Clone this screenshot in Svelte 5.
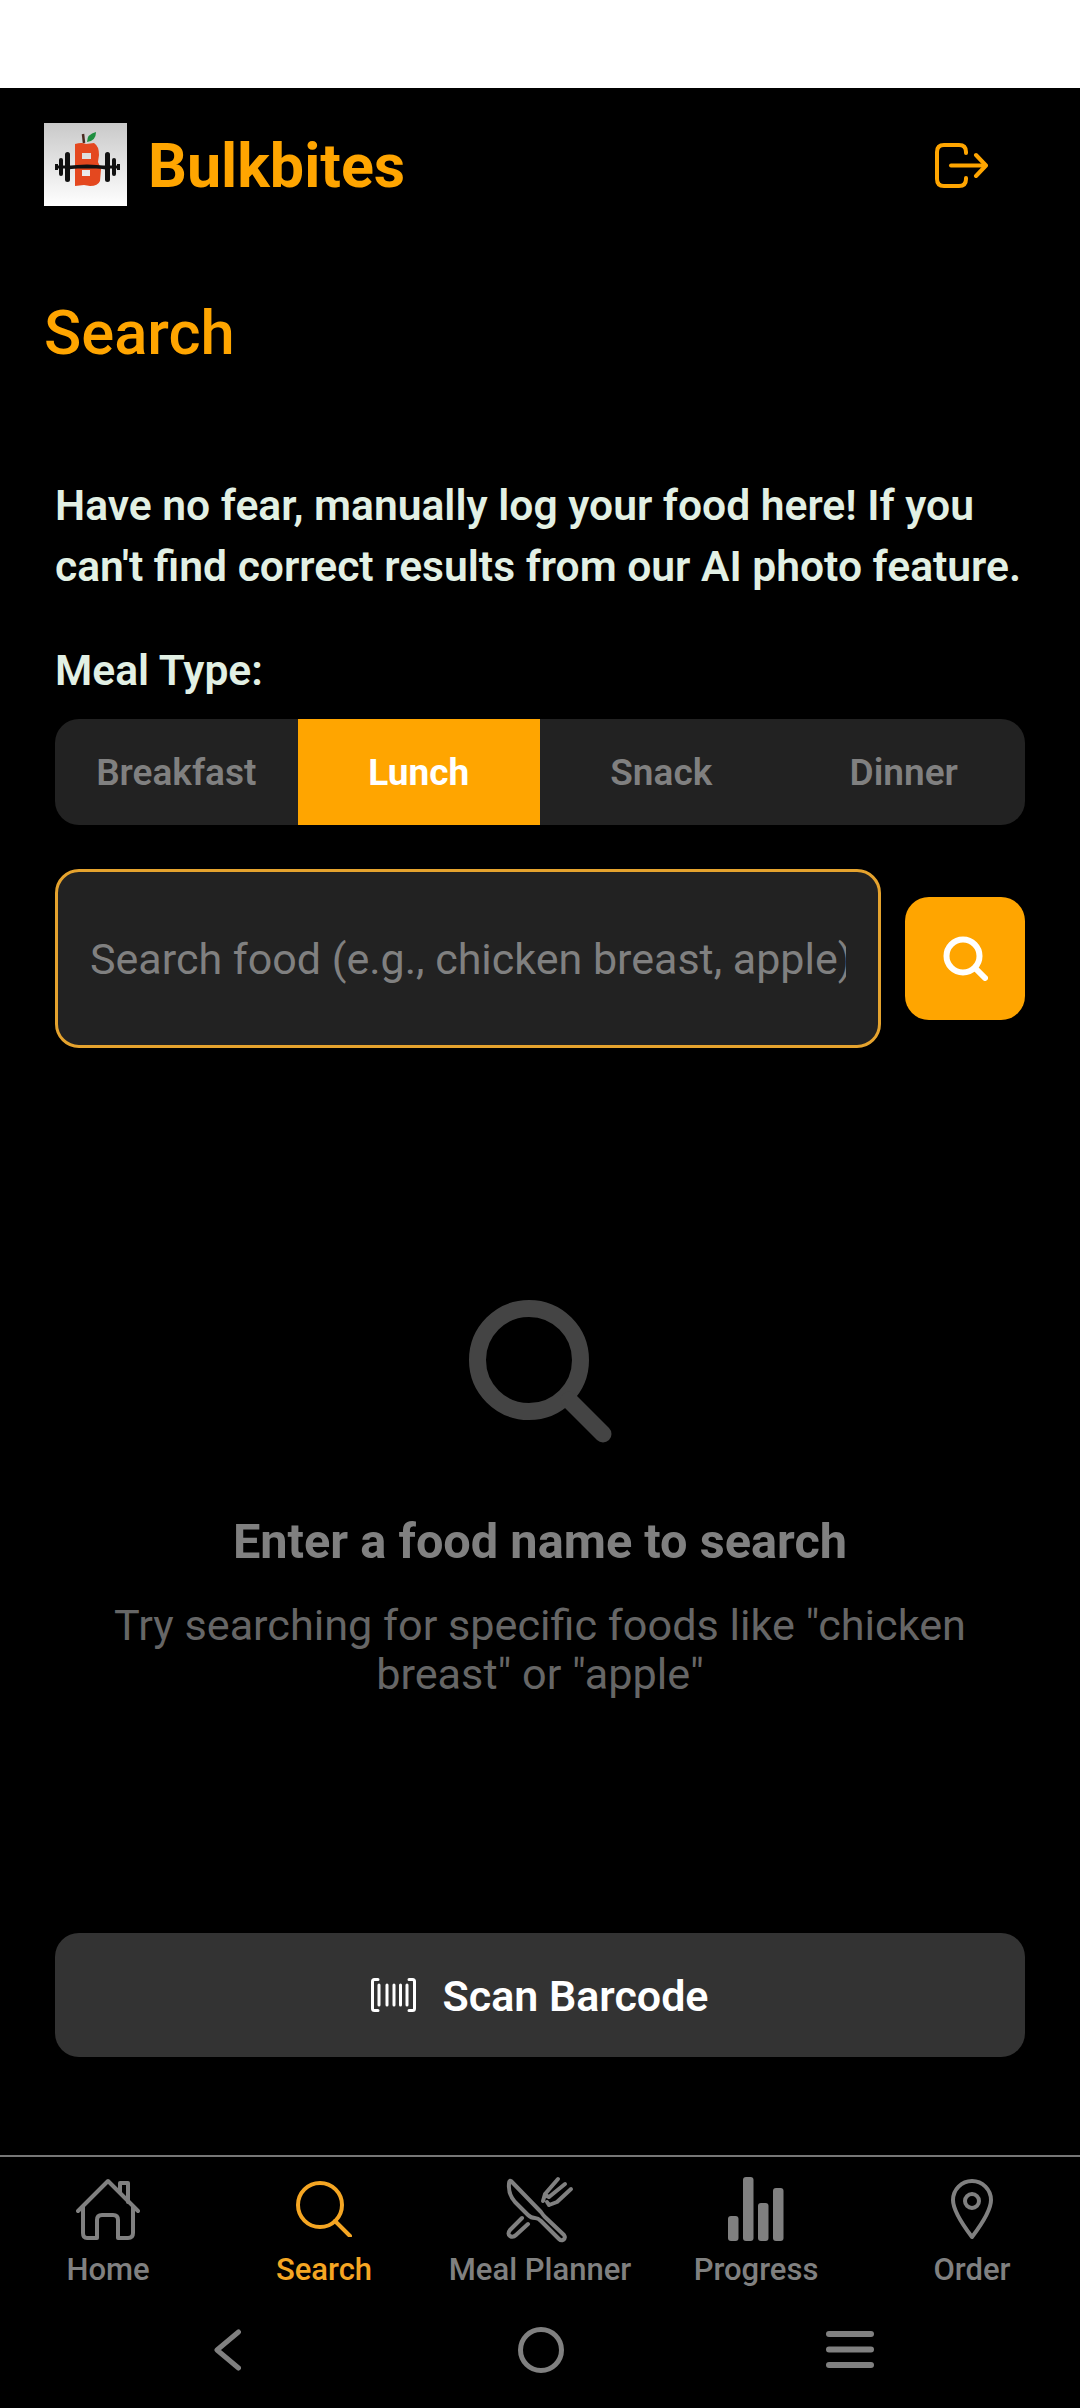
<script>
  const tabs = ['Breakfast', 'Lunch', 'Snack', 'Dinner'];
  let meal = $state('Lunch');
  let query = $state('');
</script>

<div class="screen">
  <div class="status"></div>

  <header class="top">
    <div class="brand">
      <svg class="logo" viewBox="0 0 83 83">
        <defs>
          <linearGradient id="logoBg" x1="0" y1="0" x2="0" y2="1">
            <stop offset="0" stop-color="#c9c9c9" />
            <stop offset="1" stop-color="#ffffff" />
          </linearGradient>
        </defs>
        <rect width="83" height="83" fill="url(#logoBg)" />
        <path d="M40 20 L39 11" stroke="#4a2a20" stroke-width="2.5" fill="none" />
        <path d="M43 19 Q43 11 52 9 Q52 18 43 19 Z" fill="#1f8f3f" />
        <path fill-rule="evenodd" fill="#e4481f" d="M31 21 Q38 19 42 21 L50 20 Q55 23 55 32 L54 39 L57 46 L56 58 Q54 63 46 63 L40 62 L31 63 Z M38 30 V36 H47 V30 Z M38 47 V53 H46 V47 Z" />
        <path d="M13 44 H74" stroke="#111" stroke-width="3" />
        <path d="M24 45 Q43 41 62 45" stroke="#111" stroke-width="3" fill="none" />
        <g fill="#111">
          <rect x="11" y="41" width="3" height="6" />
          <rect x="15" y="35" width="4" height="18" rx="2" />
          <rect x="21" y="29" width="5" height="30" rx="2.5" />
          <rect x="61" y="29" width="5" height="30" rx="2.5" />
          <rect x="68" y="35" width="4" height="18" rx="2" />
          <rect x="73" y="41" width="3" height="6" />
        </g>
      </svg>
      <span class="brand-name">Bulkbites</span>
    </div>
    <button class="logout" aria-label="Log out">
      <svg width="53" height="45" viewBox="0 0 53 45" fill="none" stroke="#ffa500" stroke-width="4" stroke-linecap="round" stroke-linejoin="round">
        <path d="M31 10 V9 Q31 2 24 2 H9 Q2 2 2 9 V36 Q2 43 9 43 H24 Q31 43 31 36 V35" />
        <path d="M16 22.5 H50" />
        <path d="M41 12 L51 22.5 L41 33" />
      </svg>
    </button>
  </header>

  <h1 class="page-title">Search</h1>

  <main class="content">
    <p class="intro">Have no fear, manually log your food here! If you can't find correct results from our AI photo feature.</p>
    <div class="meal-label">Meal Type:</div>

    <div class="tabs">
      {#each tabs as t}
        <button class="tab" class:active={meal === t} onclick={() => (meal = t)}>{t}</button>
      {/each}
    </div>

    <div class="search-row">
      <input class="search-input" bind:value={query} placeholder="Search food (e.g., chicken breast, apple)" />
      <button class="search-btn" aria-label="Search">
        <svg width="45" height="45" viewBox="0 0 45 45" fill="none" stroke="#fff" stroke-width="6" stroke-linecap="round">
          <circle cx="20" cy="20" r="16.5" />
          <path d="M32 32 L42 42" />
        </svg>
      </button>
    </div>

    <div class="empty">
      <svg width="143" height="143" viewBox="0 0 143 143" fill="none" stroke="#444" stroke-width="17" stroke-linecap="round">
        <circle cx="60" cy="60" r="51.5" />
        <path d="M100 100 L134 134" />
      </svg>
      <h2>Enter a food name to search</h2>
      <p>Try searching for specific foods like "chicken breast" or "apple"</p>
    </div>

    <button class="scan">
      <svg width="45" height="34" viewBox="0 0 45 34" fill="none" stroke="#fff" stroke-width="3" stroke-linecap="round" stroke-linejoin="round">
        <path d="M7 1.5 H3.5 Q1.5 1.5 1.5 3.5 V30.500 Q1.5 32.500 3.500 32.500 H7" />
        <path d="M38 1.500 H41.500 Q43.500 1.500 43.500 3.500 V30.500 Q43.500 32.500 41.500 32.500 H38" />
        <path d="M8 7 V27 M16 7 V27 M23 7 V27 M29.500 7 V27 M36 7 V27" />
      </svg>
      <span>Scan Barcode</span>
    </button>
  </main>

  <nav class="bottom">
    <div class="nav-item">
      <div class="nav-icon">
        <svg width="64" height="62" viewBox="0 0 64 62" fill="none" stroke="#808080" stroke-width="4" stroke-linecap="round" stroke-linejoin="round">
          <path d="M2 33 L32 3 L62 33" />
          <path d="M7 29 V55 Q7 60 11 60 H21 V42 Q21 37 26 37 H37 Q42 37 42 42 V60 H52 Q57 60 57 55 V29" />
          <path d="M44 14 V5 H52 V24" />
        </svg>
      </div>
      <span>Home</span>
    </div>
    <div class="nav-item active">
      <div class="nav-icon">
        <svg width="56" height="56" viewBox="0 0 56 56" fill="none" stroke="#f5a623" stroke-width="4" stroke-linecap="round">
          <circle cx="24" cy="24" r="22" />
          <path d="M39 40 L54 55" />
        </svg>
      </div>
      <span>Search</span>
    </div>
    <div class="nav-item">
      <div class="nav-icon">
        <svg width="90" height="80" viewBox="0 0 90 80" fill="none" stroke="#808080" stroke-width="4" stroke-linecap="round" stroke-linejoin="round">
          <path d="M16 12 L46 43 Q48 46 50 48 L69 66 Q71 69 68 71 Q66 72 64 70 L46 52 Q43 49 40 49 Q36 49 33 46 L20 33 Q13 25 14 15 Q14 11 16 12 Z" />
          <path d="M27 49 L15 61 Q12 65 15 67 Q18 69 21 66 L33 55" />
          <path d="M48 32 L50 25 L63 10 M54 28 L70 15 M54 36 L62 33 L76 20 M50 25 Q53 28 54 28 M54 36 L52 33" />
        </svg>
      </div>
      <span>Meal Planner</span>
    </div>
    <div class="nav-item">
      <div class="nav-icon">
        <svg width="56" height="64" viewBox="0 0 56 64" fill="#808080">
          <rect x="0" y="39" width="10.500" height="25" rx="3" />
          <rect x="15" y="0" width="10.500" height="64" rx="3" />
          <rect x="30" y="26" width="10.500" height="38" rx="3" />
          <rect x="45" y="11" width="10.500" height="53" rx="3" />
        </svg>
      </div>
      <span>Progress</span>
    </div>
    <div class="nav-item">
      <div class="nav-icon">
        <svg width="42" height="60" viewBox="0 0 42 60" fill="none" stroke="#808080" stroke-width="4" stroke-linejoin="round">
          <path d="M21 58 Q2 33 2 21 A19 19 0 0 1 40 21 Q40 33 21 58 Z" />
          <circle cx="21" cy="22" r="7" />
        </svg>
      </div>
      <span>Order</span>
    </div>
  </nav>

  <div class="sys-nav">
    <svg class="back" width="27" height="42" viewBox="0 0 27 42" fill="none" stroke="#808080" stroke-width="5" stroke-linecap="round" stroke-linejoin="round">
      <path d="M24.500 3 L3 21 L24.500 39" />
    </svg>
    <svg class="circle" width="46" height="46" viewBox="0 0 46 46" fill="none" stroke="#808080" stroke-width="5">
      <circle cx="23" cy="23" r="20.500" />
    </svg>
    <svg width="48" height="37" viewBox="0 0 48 37" fill="#808080">
      <rect width="48" height="6" rx="3" />
      <rect y="15.500" width="48" height="6" rx="3" />
      <rect y="31" width="48" height="6" rx="3" />
    </svg>
  </div>
</div>

<style>
  :global(body) {
    margin: 0;
    background: #000;
  }

  .screen {
    width: 1080px;
    height: 2408px;
    display: flex;
    flex-direction: column;
    background: #000;
    font-family: Roboto, 'Liberation Sans', sans-serif;
    overflow: hidden;
  }

  button {
    font-family: inherit;
    border: none;
    padding: 0;
    cursor: pointer;
  }

  .status {
    height: 88px;
    flex: none;
    background: #fff;
  }

  .top {
    display: flex;
    align-items: center;
    justify-content: space-between;
    padding: 35px 92px 0 44px;
  }

  .brand {
    display: flex;
    align-items: center;
    gap: 21px;
  }

  .logo {
    width: 83px;
    height: 83px;
    display: block;
  }

  .brand-name {
    margin-top: 4px;
    font-size: 61px;
    font-weight: 700;
    color: #ffa500;
    line-height: 79px;
  }

  .logout {
    background: none;
    display: flex;
    margin-top: 1px;
  }

  .page-title {
    margin: 88px 0 0 44px;
    font-size: 61.500px;
    font-weight: 500;
    line-height: 78px;
    color: #ffa500;
  }

  .content {
    flex: 1;
    display: flex;
    flex-direction: column;
    padding: 0 55px;
  }

  .intro {
    margin: 103px 0 0;
    font-size: 42.600px;
    font-weight: 600;
    line-height: 61px;
    color: #e2f0e4;
  }

  .meal-label {
    margin-top: 47px;
    font-size: 42.600px;
    font-weight: 600;
    line-height: 52px;
    color: #e2f0e4;
  }

  .tabs {
    margin-top: 23px;
    height: 106px;
    display: flex;
    border-radius: 24px;
    overflow: hidden;
    background: #222;
  }

  .tab {
    flex: 1;
    background: none;
    font-size: 37px;
    font-weight: 600;
    color: #808080;
  }

  .tab.active {
    background: #ffa500;
    color: #fff;
    font-weight: 700;
  }

  .search-row {
    margin-top: 44px;
    display: flex;
    align-items: center;
    gap: 24px;
  }

  .search-input {
    flex: 1;
    min-width: 0;
    box-sizing: border-box;
    height: 179px;
    padding: 0 32px;
    border: 3px solid #e5a32e;
    border-radius: 24px;
    background: #222;
    color: #fff;
    font-family: inherit;
    font-size: 43px;
    outline: none;
  }

  .search-input::placeholder {
    color: #808080;
    opacity: 1;
  }

  .search-btn {
    width: 120px;
    height: 123px;
    flex: none;
    display: flex;
    align-items: center;
    justify-content: center;
    border-radius: 24px;
    background: #ffa500;
  }

  .empty {
    margin-top: 252px;
    display: flex;
    flex-direction: column;
    align-items: center;
    text-align: center;
  }

  .empty svg {
    display: block;
  }

  .empty h2 {
    margin: 69px 0 0;
    font-size: 48.700px;
    font-weight: 700;
    line-height: 60px;
    color: #808080;
  }

  .empty p {
    margin: 29px 30px 0;
    font-size: 43.200px;
    font-weight: 400;
    line-height: 49px;
    color: #666;
  }

  .scan {
    margin-top: auto;
    margin-bottom: 98px;
    height: 124px;
    flex: none;
    display: flex;
    align-items: center;
    justify-content: center;
    gap: 26px;
    border-radius: 24px;
    background: #333;
    color: #fff;
    font-size: 43px;
    font-weight: 600;
  }

  .scan span {
    margin-top: 2px;
  }

  .bottom {
    flex: none;
    display: flex;
    border-top: 2px solid #777;
    padding-top: 20px;
  }

  .nav-item {
    flex: 1;
    display: flex;
    flex-direction: column;
    align-items: center;
    font-size: 31px;
    font-weight: 500;
    line-height: 34px;
    color: #808080;
  }

  .nav-item.active {
    color: #f5a623;
  }

  .nav-icon {
    height: 64px;
    margin-bottom: 12px;
    display: flex;
    align-items: center;
    justify-content: center;
  }

  .sys-nav {
    flex: none;
    height: 121px;
    display: flex;
    align-items: center;
    padding: 4px 0 0 214px;
    box-sizing: border-box;
  }

  .sys-nav svg {
    display: block;
  }

  .back {
    margin-right: 277px;
  }

  .circle {
    margin-right: 262px;
  }
</style>
